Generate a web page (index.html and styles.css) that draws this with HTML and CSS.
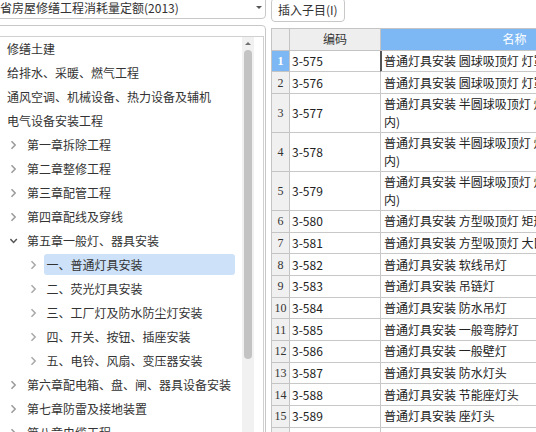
FILE: index.html
```html
<!DOCTYPE html>
<html lang="zh-CN">
<head>
<meta charset="utf-8">
<title>定额</title>
<link rel="stylesheet" href="styles.css">
</head>
<body>
<div class="app">
  <div class="left">
    <div class="select">
      <span class="select-text">省房屋修缮工程消耗量定额(2013)</span>
      <span class="caret"></span>
    </div>
    <div class="panel">
      <div class="treebox">
        <ul class="tree">
          <li class="item lv0"><span class="arrow"></span><span class="label">修缮土建</span></li>
          <li class="item lv0"><span class="arrow"></span><span class="label">给排水、采暖、燃气工程</span></li>
          <li class="item lv0"><span class="arrow"></span><span class="label">通风空调、机械设备、热力设备及辅机</span></li>
          <li class="item lv0"><span class="arrow"></span><span class="label">电气设备安装工程</span></li>
          <li class="item lv1"><span class="arrow"><svg viewBox="0 0 8 10" width="8" height="10"><polyline points="1.5,1.2 5.2,5 1.5,8.8" class="chev"/></svg></span><span class="label">第一章拆除工程</span></li>
          <li class="item lv1"><span class="arrow"><svg viewBox="0 0 8 10" width="8" height="10"><polyline points="1.5,1.2 5.2,5 1.5,8.8" class="chev"/></svg></span><span class="label">第二章整修工程</span></li>
          <li class="item lv1"><span class="arrow"><svg viewBox="0 0 8 10" width="8" height="10"><polyline points="1.5,1.2 5.2,5 1.5,8.8" class="chev"/></svg></span><span class="label">第三章配管工程</span></li>
          <li class="item lv1"><span class="arrow"><svg viewBox="0 0 8 10" width="8" height="10"><polyline points="1.5,1.2 5.2,5 1.5,8.8" class="chev"/></svg></span><span class="label">第四章配线及穿线</span></li>
          <li class="item lv1"><span class="arrow"><svg viewBox="0 0 8 10" width="8" height="10"><polyline points="0.4,3 3.6,6.4 6.8,3" class="chev open"/></svg></span><span class="label">第五章一般灯、器具安装</span></li>
          <li class="item lv2"><span class="arrow"><svg viewBox="0 0 8 10" width="8" height="10"><polyline points="1.5,1.2 5.2,5 1.5,8.8" class="chev light"/></svg></span><span class="label selected">一、普通灯具安装</span></li>
          <li class="item lv2"><span class="arrow"><svg viewBox="0 0 8 10" width="8" height="10"><polyline points="1.5,1.2 5.2,5 1.5,8.8" class="chev light"/></svg></span><span class="label">二、荧光灯具安装</span></li>
          <li class="item lv2"><span class="arrow"><svg viewBox="0 0 8 10" width="8" height="10"><polyline points="1.5,1.2 5.2,5 1.5,8.8" class="chev light"/></svg></span><span class="label">三、工厂灯及防水防尘灯安装</span></li>
          <li class="item lv2"><span class="arrow"><svg viewBox="0 0 8 10" width="8" height="10"><polyline points="1.5,1.2 5.2,5 1.5,8.8" class="chev light"/></svg></span><span class="label">四、开关、按钮、插座安装</span></li>
          <li class="item lv2"><span class="arrow"><svg viewBox="0 0 8 10" width="8" height="10"><polyline points="1.5,1.2 5.2,5 1.5,8.8" class="chev light"/></svg></span><span class="label">五、电铃、风扇、变压器安装</span></li>
          <li class="item lv1"><span class="arrow"><svg viewBox="0 0 8 10" width="8" height="10"><polyline points="1.5,1.2 5.2,5 1.5,8.8" class="chev"/></svg></span><span class="label">第六章配电箱、盘、闸、器具设备安装</span></li>
          <li class="item lv1"><span class="arrow"><svg viewBox="0 0 8 10" width="8" height="10"><polyline points="1.5,1.2 5.2,5 1.5,8.8" class="chev"/></svg></span><span class="label">第七章防雷及接地装置</span></li>
          <li class="item lv1"><span class="arrow"><svg viewBox="0 0 8 10" width="8" height="10"><polyline points="1.5,1.2 5.2,5 1.5,8.8" class="chev"/></svg></span><span class="label">第八章电缆工程</span></li>
          <li class="item lv1"><span class="arrow"><svg viewBox="0 0 8 10" width="8" height="10"><polyline points="1.5,1.2 5.2,5 1.5,8.8" class="chev"/></svg></span><span class="label">第九章照明器具</span></li>
        </ul>
        <div class="scrollbar"><span class="sb-up"></span><span class="sb-thumb"></span></div>
      </div>
    </div>
  </div>
  <div class="right">
    <button class="btn" type="button">插入子目(I)</button>
    <div class="grid">
      <div class="row head">
        <div class="cell num"></div>
        <div class="cell code-h">编码</div>
        <div class="cell name-h">名称</div>
      </div>
      <div class="row current">
        <div class="cell num active">1</div>
        <div class="cell code">3-575</div>
        <div class="cell name">普通灯具安装 圆球吸顶灯 灯罩直径250mm以内</div>
      </div>
      <div class="row">
        <div class="cell num">2</div>
        <div class="cell code">3-576</div>
        <div class="cell name">普通灯具安装 圆球吸顶灯 灯罩直径300mm以内</div>
      </div>
      <div class="row">
        <div class="cell num">3</div>
        <div class="cell code">3-577</div>
        <div class="cell name">普通灯具安装 半圆球吸顶灯 灯罩直径(250mm以<br>内)</div>
      </div>
      <div class="row">
        <div class="cell num">4</div>
        <div class="cell code">3-578</div>
        <div class="cell name">普通灯具安装 半圆球吸顶灯 灯罩直径(300mm以<br>内)</div>
      </div>
      <div class="row">
        <div class="cell num">5</div>
        <div class="cell code">3-579</div>
        <div class="cell name">普通灯具安装 半圆球吸顶灯 灯罩直径(350mm以<br>内)</div>
      </div>
      <div class="row">
        <div class="cell num">6</div>
        <div class="cell code">3-580</div>
        <div class="cell name">普通灯具安装 方型吸顶灯 矩形罩</div>
      </div>
      <div class="row">
        <div class="cell num">7</div>
        <div class="cell code">3-581</div>
        <div class="cell name">普通灯具安装 方型吸顶灯 大口方罩</div>
      </div>
      <div class="row">
        <div class="cell num">8</div>
        <div class="cell code">3-582</div>
        <div class="cell name">普通灯具安装 软线吊灯</div>
      </div>
      <div class="row">
        <div class="cell num">9</div>
        <div class="cell code">3-583</div>
        <div class="cell name">普通灯具安装 吊链灯</div>
      </div>
      <div class="row">
        <div class="cell num">10</div>
        <div class="cell code">3-584</div>
        <div class="cell name">普通灯具安装 防水吊灯</div>
      </div>
      <div class="row">
        <div class="cell num">11</div>
        <div class="cell code">3-585</div>
        <div class="cell name">普通灯具安装 一般弯脖灯</div>
      </div>
      <div class="row">
        <div class="cell num">12</div>
        <div class="cell code">3-586</div>
        <div class="cell name">普通灯具安装 一般壁灯</div>
      </div>
      <div class="row">
        <div class="cell num">13</div>
        <div class="cell code">3-587</div>
        <div class="cell name">普通灯具安装 防水灯头</div>
      </div>
      <div class="row">
        <div class="cell num">14</div>
        <div class="cell code">3-588</div>
        <div class="cell name">普通灯具安装 节能座灯头</div>
      </div>
      <div class="row">
        <div class="cell num">15</div>
        <div class="cell code">3-589</div>
        <div class="cell name">普通灯具安装 座灯头</div>
      </div>
      <div class="row">
        <div class="cell num">16</div>
        <div class="cell code">3-590</div>
        <div class="cell name">普通灯具安装 吊式艺术装饰灯</div>
      </div>
    </div>
  </div>
</div>
</body>
</html>
```

FILE: styles.css
```css
html, body {
  margin: 0;
  padding: 0;
  height: 100%;
  overflow: hidden;
  background: #ffffff;
}

body {
  font-family: "Noto Sans CJK SC", "Noto Sans", sans-serif;
  font-size: 12px;
  color: #333333;
}

.app {
  display: flex;
  align-items: flex-start;
  height: 432px;
  overflow: hidden;
}

/* ---------- left column ---------- */
.left {
  flex: none;
  width: 278px;
  margin-left: -12px;
  margin-top: -5px;
  display: flex;
  flex-direction: column;
  gap: 6px;
}

.select {
  position: relative;
  box-sizing: border-box;
  height: 24px;
  border: 1px solid #c8c8c8;
  border-radius: 4px;
  display: flex;
  align-items: center;
  padding-left: 11px;
  white-space: nowrap;
  overflow: hidden;
}

.select-text {
  font-size: 12px;
  color: #333333;
}

.caret {
  position: absolute;
  right: 3px;
  top: 10px;
  width: 0;
  height: 0;
  border-left: 3px solid transparent;
  border-right: 3px solid transparent;
  border-top: 3px solid #555555;
}

.panel {
  box-sizing: border-box;
  height: 440px;
  border: 1px solid #c8c8c8;
  border-radius: 4px;
  padding: 10px 1px 0 0;
  overflow: hidden;
}

.treebox {
  box-sizing: border-box;
  height: 100%;
  border: 1px solid #d0d0d0;
  display: flex;
}

.tree {
  flex: 1;
  min-width: 0;
  margin: 0;
  padding: 0;
  list-style: none;
}

.item {
  display: flex;
  align-items: center;
  height: 24px;
  box-sizing: border-box;
  padding-top: 1px;
  padding-bottom: 2px;
  white-space: nowrap;
}

.item.lv0 { padding-left: 0; }
.item.lv1 { padding-left: 20px; }
.item.lv2 { padding-left: 39.5px; }

.arrow {
  flex: none;
  width: 14px;
  height: 21px;
  display: flex;
  align-items: center;
}

.arrow svg {
  display: block;
}

.chev {
  fill: none;
  stroke: #9a9a9a;
  stroke-width: 1.5;
}

.chev.open {
  stroke: #555555;
}

.chev.light {
  stroke: #a8a8a8;
}

.label {
  flex: 1;
  min-width: 0;
  line-height: 21px;
  padding: 0 3px;
  margin-right: 7px;
  border-radius: 3px;
  color: #333333;
}

.label.selected {
  background: #cde1f8;
}

.scrollbar {
  position: relative;
  flex: none;
  width: 12px;
  margin-right: 9px;
  background: #f1f1f1;
}

.sb-up {
  position: absolute;
  top: 5px;
  left: 3px;
  width: 0;
  height: 0;
  border-left: 3px solid transparent;
  border-right: 3px solid transparent;
  border-bottom: 3px solid #707070;
}

.sb-thumb {
  position: absolute;
  top: 13px;
  left: 2px;
  width: 8px;
  height: 309px;
  border-radius: 4px;
  background: #c3c3c3;
}

/* ---------- right column ---------- */
.right {
  flex: none;
  margin-left: 5px;
  margin-top: -2px;
  display: flex;
  flex-direction: column;
  align-items: flex-start;
}

.btn {
  box-sizing: border-box;
  height: 24px;
  padding: 0 6px;
  border: 1px solid #c8c8c8;
  border-radius: 4px;
  background: #ffffff;
  font-family: "Noto Sans CJK SC", "Noto Sans", sans-serif;
  font-size: 12px;
  line-height: 22px;
  color: #333333;
}

.grid {
  margin-top: 6px;
  border-top: 1px solid #c4c4c4;
  border-left: 1px solid #c4c4c4;
}

.row {
  display: grid;
  grid-template-columns: 18px 91px 268px;
}

.cell {
  box-sizing: border-box;
  min-height: 21.67px;
  border-right: 1px solid #c8c8c8;
  border-bottom: 1px solid #c8c8c8;
  display: flex;
  align-items: center;
  line-height: 18px;
  white-space: nowrap;
  overflow: hidden;
}

.cell.num {
  justify-content: center;
  background: #f0f0f0;
  border-color: #c4c4c4;
  font-family: "Liberation Serif", serif;
  font-size: 12px;
  color: #333333;
}

.cell.num.active {
  background: #7db8f4;
  color: #ffffff;
  font-weight: bold;
}

.cell.code {
  padding-left: 2px;
  color: #222222;
}

.cell.name {
  padding: 1px 0 1px 3px;
  color: #222222;
}

.row.current .cell.code {
  border-right-color: #555555;
}

.row.current .cell.name {
  box-shadow: inset 1px 0 0 #555555;
}

.head .cell {
  background: #eeeeee;
  border-color: #c4c4c4;
}

.cell.code-h {
  justify-content: center;
  color: #333333;
}

.head .cell.name-h {
  justify-content: center;
  background: #7db8f4;
  color: #ffffff;
}
```
